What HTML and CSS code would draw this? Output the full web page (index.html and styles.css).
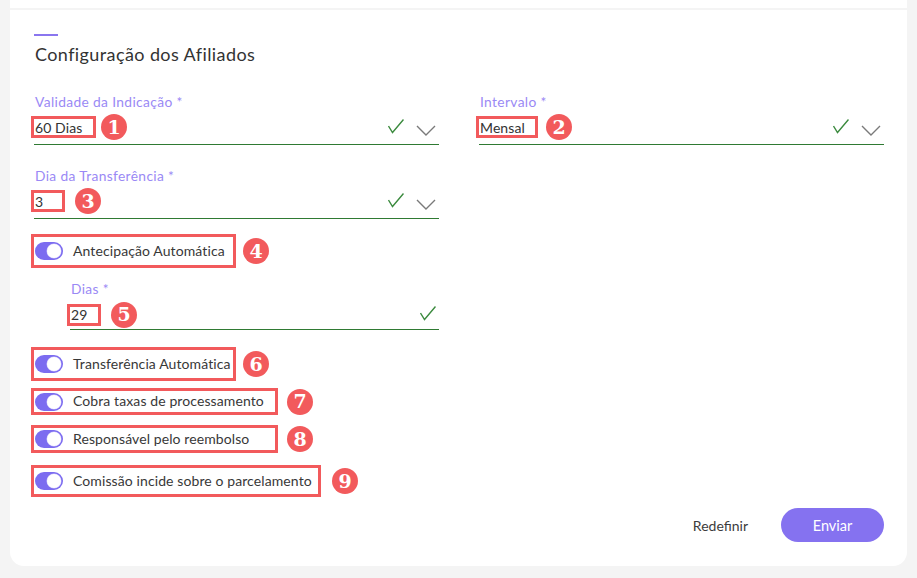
FILE: index.html
```html
<!DOCTYPE html>
<html lang="pt">
<head>
<meta charset="utf-8">
<title>Configuração dos Afiliados</title>
<link rel="stylesheet" href="styles.css">
</head>
<body>
<div class="topbar"></div>
<main class="card">
  <div class="accent"></div>
  <h2 class="title">Configuração dos Afiliados</h2>

  <div class="grid">
    <div class="col">
      <div class="field">
        <label class="label">Validade da Indicação *</label>
        <div class="control">
          <span class="mark w65">60 Dias</span>
          <span class="badge g5">1</span>
          <span class="icons">
            <svg class="check" width="16" height="15" viewBox="0 0 16 15"><polyline points="0.5,7 4.5,13.5 15.5,0.5" fill="none" stroke="#3b8a3e" stroke-width="1.4"/></svg>
            <svg class="chev" width="20" height="11" viewBox="0 0 20 11"><polyline points="1,1 10,10 19,1" fill="none" stroke="#7a7a7a" stroke-width="1.4"/></svg>
          </span>
        </div>
      </div>

      <div class="field f3">
        <label class="label">Dia da Transferência *</label>
        <div class="control">
          <span class="mark w34">3</span>
          <span class="badge g10">3</span>
          <span class="icons">
            <svg class="check" width="16" height="15" viewBox="0 0 16 15"><polyline points="0.5,7 4.5,13.5 15.5,0.5" fill="none" stroke="#3b8a3e" stroke-width="1.4"/></svg>
            <svg class="chev" width="20" height="11" viewBox="0 0 20 11"><polyline points="1,1 10,10 19,1" fill="none" stroke="#7a7a7a" stroke-width="1.4"/></svg>
          </span>
        </div>
      </div>

      <div class="annot t4">
        <div class="switch-row w205 h34">
          <span class="switch"><span class="knob"></span></span>
          <span class="switch-text">Antecipação Automática</span>
        </div>
        <span class="badge g7">4</span>
      </div>

      <div class="field sub">
        <label class="label">Dias *</label>
        <div class="control short">
          <span class="mark w34">29</span>
          <span class="badge g10">5</span>
          <span class="icons">
            <svg class="check" width="16" height="15" viewBox="0 0 16 15"><polyline points="0.5,7 4.5,13.5 15.5,0.5" fill="none" stroke="#3b8a3e" stroke-width="1.4"/></svg>
          </span>
        </div>
      </div>

      <div class="annot t6">
        <div class="switch-row w205 h34">
          <span class="switch"><span class="knob"></span></span>
          <span class="switch-text">Transferência Automática</span>
        </div>
        <span class="badge g7">6</span>
      </div>

      <div class="annot t7">
        <div class="switch-row w247 h27">
          <span class="switch"><span class="knob"></span></span>
          <span class="switch-text">Cobra taxas de processamento</span>
        </div>
        <span class="badge g9">7</span>
      </div>

      <div class="annot t8">
        <div class="switch-row w247 h28">
          <span class="switch"><span class="knob"></span></span>
          <span class="switch-text">Responsável pelo reembolso</span>
        </div>
        <span class="badge g9">8</span>
      </div>

      <div class="annot t9">
        <div class="switch-row w290 h32">
          <span class="switch"><span class="knob"></span></span>
          <span class="switch-text">Comissão incide sobre o parcelamento</span>
        </div>
        <span class="badge g11">9</span>
      </div>
    </div>

    <div class="col">
      <div class="field">
        <label class="label">Intervalo *</label>
        <div class="control">
          <span class="mark w62">Mensal</span>
          <span class="badge g8">2</span>
          <span class="icons">
            <svg class="check" width="16" height="15" viewBox="0 0 16 15"><polyline points="0.5,7 4.5,13.5 15.5,0.5" fill="none" stroke="#3b8a3e" stroke-width="1.4"/></svg>
            <svg class="chev" width="20" height="11" viewBox="0 0 20 11"><polyline points="1,1 10,10 19,1" fill="none" stroke="#7a7a7a" stroke-width="1.4"/></svg>
          </span>
        </div>
      </div>
    </div>
  </div>

  <div class="actions">
    <button class="btn-link" type="button">Redefinir</button>
    <button class="btn-primary" type="button">Enviar</button>
  </div>
</main>
</body>
</html>
```

FILE: styles.css
```css
* { box-sizing: border-box; }

html, body {
  margin: 0;
  padding: 0;
  background: #f4f4f4;
  font-family: Lato, "Noto Sans", "Liberation Sans", sans-serif;
  color: #383838;
}

.topbar {
  height: 8px;
  margin: 0 10px;
  background: #ffffff;
}

.card {
  margin: 2px 10px 0;
  background: #ffffff;
  border-radius: 0 0 14px 14px;
  padding: 24px 23px 24px 24px;
  height: 556px;
  display: flex;
  flex-direction: column;
}

.accent {
  width: 24px;
  height: 2px;
  background: #8a76ef;
}

.title {
  margin: 6px 0 0 1px;
  font-size: 18px;
  letter-spacing: 0.4px;
  line-height: 24px;
  font-weight: 400;
  color: #333333;
}

.grid {
  margin-top: 28px;
  display: grid;
  grid-template-columns: 405px 405px;
  column-gap: 40px;
}

.col {
  display: flex;
  flex-direction: column;
  align-items: flex-start;
}

.field {
  width: 100%;
}

.field.f3 { margin-top: 23px; }

.field.sub {
  margin-top: 13px;
  margin-left: 36px;
  width: calc(100% - 36px);
}

.label {
  display: block;
  font-size: 13.8px;
  letter-spacing: 0.35px;
  line-height: 16px;
  color: #9a89f5;
  padding-left: 1px;
}

.control {
  display: flex;
  align-items: center;
  height: 35px;
  border-bottom: 1px solid #2f7a33;
}

.control.short {
  height: 33px;
  padding-top: 3px;
}

.mark {
  display: inline-flex;
  align-items: center;
  height: 22px;
  margin-left: -3px;
  padding-left: 1px;
  border: 3px solid #f25a5c;
  font-size: 14px;
  letter-spacing: 0.1px;
  color: #333333;
  white-space: nowrap;
}

.w34 { width: 34px; }
.w62 { width: 62px; }
.w65 { width: 65px; }

.badge {
  flex: none;
  width: 26px;
  height: 26px;
  border-radius: 50%;
  background: #f25a5c;
  color: #ffffff;
  display: inline-flex;
  align-items: center;
  justify-content: center;
  font-family: "DejaVu Serif", "Liberation Serif", serif;
  font-weight: 700;
  font-size: 19px;
  line-height: 1;
}

.g5 { margin-left: 5px; }
.g7 { margin-left: 7px; }
.g8 { margin-left: 8px; }
.g9 { margin-left: 9px; }
.g10 { margin-left: 10px; }
.g11 { margin-left: 11px; }

.icons {
  margin-left: auto;
  margin-right: 3px;
  display: flex;
  align-items: center;
  gap: 12px;
}

.check { display: block; margin-top: -2px; }
.chev { display: block; margin-top: 7px; }

.annot {
  display: flex;
  align-items: center;
}

.t4 { margin-top: 15px; }
.t6 { margin-top: 17px; }
.t7 { margin-top: 7px; }
.t8 { margin-top: 10px; }
.t9 { margin-top: 12px; }

.switch-row {
  display: flex;
  align-items: center;
  gap: 10px;
  margin-left: -3px;
  padding-left: 1px;
  border: 3px solid #f25a5c;
}

.w205 { width: 205px; }
.w247 { width: 247px; }
.w290 { width: 290px; }
.h27 { height: 27px; }
.h28 { height: 28px; }
.h32 { height: 32px; }
.h34 { height: 34px; }

.switch {
  flex: none;
  position: relative;
  width: 28px;
  height: 18px;
  border-radius: 9px;
  background: #7c6cf0;
}

.knob {
  position: absolute;
  top: 2px;
  right: 2px;
  width: 14px;
  height: 14px;
  border-radius: 50%;
  background: #ffffff;
  box-shadow: 0 0 0 0.5px #c9c0fa;
}

.switch-text {
  font-size: 14px;
  letter-spacing: 0.1px;
  color: #383838;
  white-space: nowrap;
  margin-top: -2px;
}

.actions {
  margin-top: auto;
  display: flex;
  justify-content: flex-end;
  align-items: center;
  gap: 17px;
}

.btn-link {
  border: none;
  background: transparent;
  font-family: inherit;
  font-size: 14px;
  color: #3c3c3c;
  padding: 0 16px;
  height: 34px;
  cursor: pointer;
}

.btn-primary {
  border: none;
  width: 103px;
  height: 34px;
  border-radius: 17px;
  background: #8572f0;
  color: #ffffff;
  font-family: inherit;
  font-size: 14.5px;
  cursor: pointer;
}
```
